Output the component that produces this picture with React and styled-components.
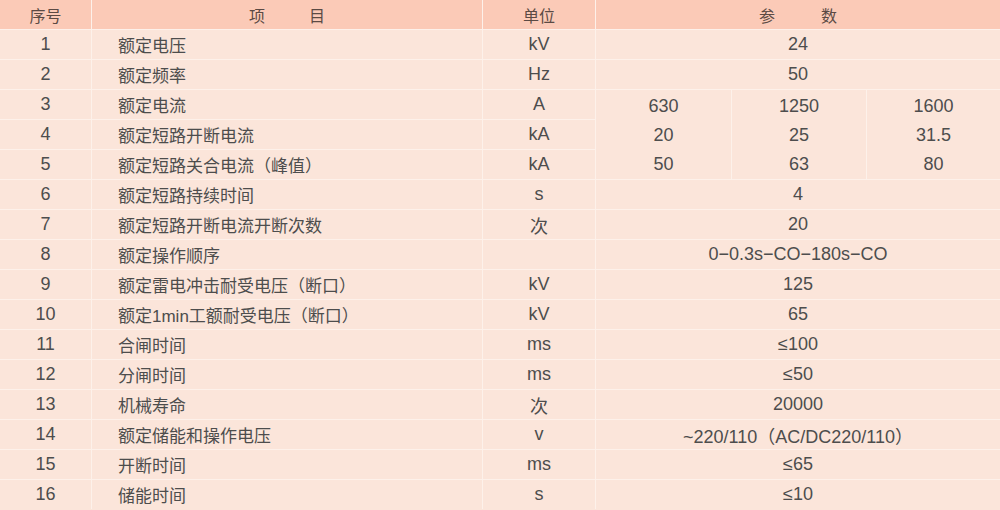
import React from "react";
import styled, { createGlobalStyle } from "styled-components";

const GlobalStyle = createGlobalStyle`
  body {
    margin: 0;
    background: #fbe5da;
    font-family: "Liberation Sans", "Noto Sans CJK SC", sans-serif;
  }
`;

const Table = styled.div`
  width: 1000px;
  display: grid;
  grid-template-columns: 91px 390px 112px 135px 134px 1fr;
  grid-template-rows: 29px;
  grid-auto-rows: 29px;
  gap: 1px;
  background: #fdf1ea;
`;

const HeadCell = styled.div`
  grid-column: ${(p) => p.$span || "auto"};
  background: #fbcab7;
  color: #5b4a44;
  font-size: 16px;
  display: flex;
  align-items: center;
  justify-content: center;
  gap: ${(p) => p.$spread || "0px"};
`;

const Cell = styled.div`
  grid-column: ${(p) => p.$span || "auto"};
  background: #fbe5da;
  color: #4d4d4d;
  font-size: ${(p) => (p.$left ? "17px" : "18px")};
  display: flex;
  align-items: center;
  justify-content: ${(p) => (p.$left ? "flex-start" : "center")};
  padding-left: ${(p) => (p.$left ? "26px" : "0")};
`;

const Stack = styled.div`
  grid-row: span 3;
  background: #fbe5da;
  color: #4d4d4d;
  font-size: 18px;
  display: grid;
  grid-template-rows: repeat(3, 1fr);
  justify-items: center;
  align-items: center;
  padding-top: 2px;
`;

const rows = [
  ["1", "额定电压", "kV", "24"],
  ["2", "额定频率", "Hz", "50"],
  ["3", "额定电流", "A", null],
  ["4", "额定短路开断电流", "kA", null],
  ["5", "额定短路关合电流（峰值）", "kA", null],
  ["6", "额定短路持续时间", "s", "4"],
  ["7", "额定短路开断电流开断次数", "次", "20"],
  ["8", "额定操作顺序", "", "0−0.3s−CO−180s−CO"],
  ["9", "额定雷电冲击耐受电压（断口）", "kV", "125"],
  ["10", "额定1min工额耐受电压（断口）", "kV", "65"],
  ["11", "合闸时间", "ms", "≤100"],
  ["12", "分闸时间", "ms", "≤50"],
  ["13", "机械寿命", "次", "20000"],
  ["14", "额定储能和操作电压", "v", "~220/110（AC/DC220/110）"],
  ["15", "开断时间", "ms", "≤65"],
  ["16", "储能时间", "s", "≤10"],
];

const ratings = [
  ["630", "20", "50"],
  ["1250", "25", "63"],
  ["1600", "31.5", "80"],
];

export default function App() {
  return (
    <>
      <GlobalStyle />
      <Table>
        <HeadCell>序号</HeadCell>
        <HeadCell $spread="44px">
          <span>项</span>
          <span>目</span>
        </HeadCell>
        <HeadCell>单位</HeadCell>
        <HeadCell $span="span 3" $spread="46px">
          <span>参</span>
          <span>数</span>
        </HeadCell>
        {rows.map(([no, name, unit, value]) => (
          <React.Fragment key={no}>
            <Cell>{no}</Cell>
            <Cell $left>{name}</Cell>
            <Cell>{unit}</Cell>
            {value !== null && <Cell $span="span 3">{value}</Cell>}
            {no === "3" &&
              ratings.map((col) => (
                <Stack key={col[0]}>
                  {col.map((v) => (
                    <span key={v}>{v}</span>
                  ))}
                </Stack>
              ))}
          </React.Fragment>
        ))}
      </Table>
    </>
  );
}
